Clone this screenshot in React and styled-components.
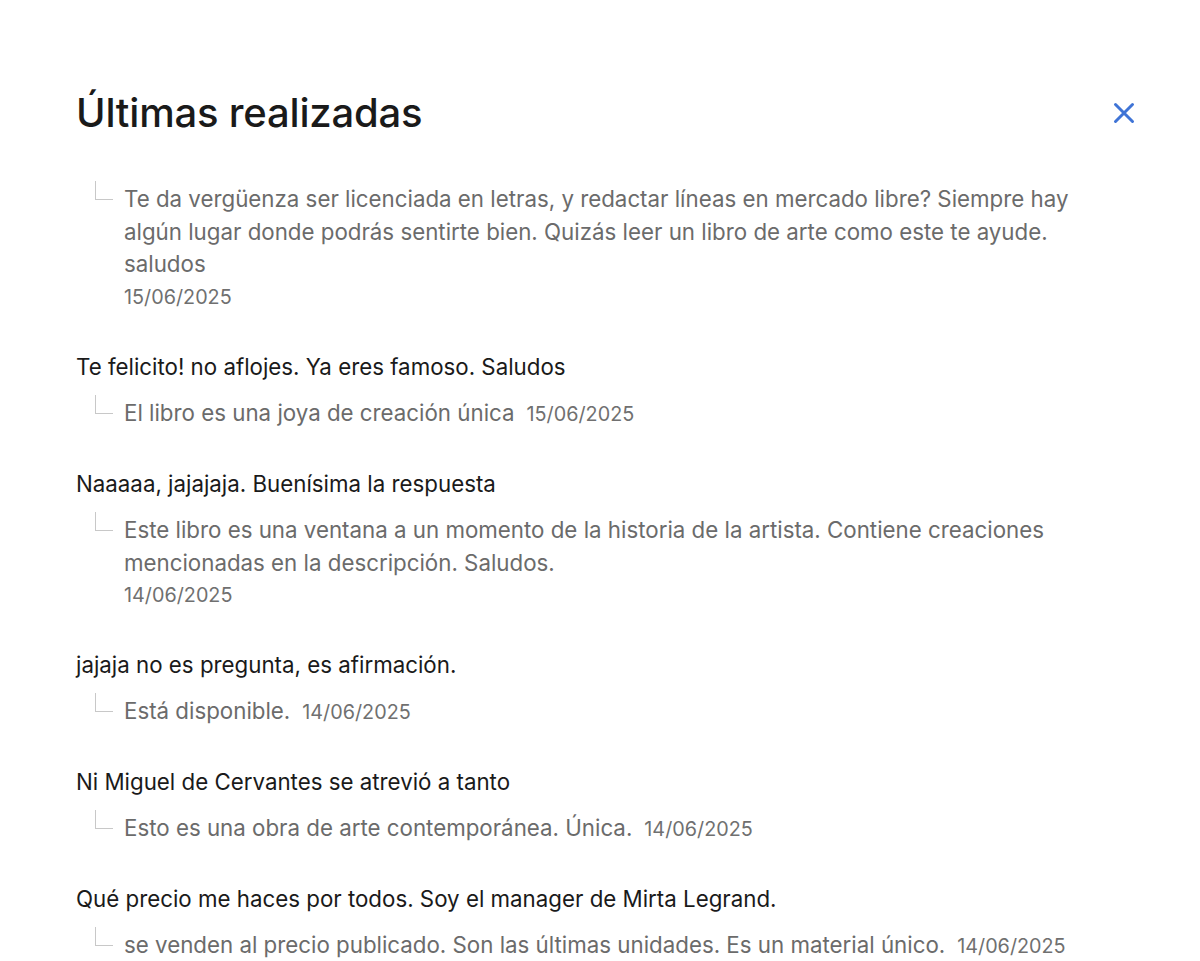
import React from "react";
import styled, { createGlobalStyle } from "styled-components";

const GlobalStyle = createGlobalStyle`
  body {
    margin: 0;
    background: #fff;
    font-family: Inter, "Open Sans", sans-serif;
  }
`;

const Page = styled.div`
  box-sizing: border-box;
  width: 1200px;
  height: 961px;
  overflow: hidden;
  padding: 89px 64px 0 76px;
`;

const Header = styled.div`
  display: flex;
  align-items: center;
  justify-content: space-between;
`;

const Title = styled.h2`
  margin: 0;
  font-size: 40px;
  line-height: 48px;
  font-weight: 500;
  color: #1a1a1a;
  letter-spacing: -0.2px;
`;

const CloseButton = styled.button`
  display: flex;
  align-items: center;
  justify-content: center;
  width: 28px;
  height: 28px;
  padding: 0;
  margin-right: -2px;
  border: none;
  background: none;
  cursor: pointer;
`;

const List = styled.div`
  display: flex;
  flex-direction: column;
  gap: 37.5px;
  margin-top: 46px;
`;

const Item = styled.div`
  display: flex;
  flex-direction: column;
  gap: 14px;
`;

const Question = styled.p`
  margin: 0;
  font-size: 22.3px;
  line-height: 32px;
  color: #1a1a1a;
`;

const Reply = styled.div`
  display: flex;
  align-items: flex-start;
`;

const Corner = styled.span`
  flex: none;
  width: 17px;
  height: 18px;
  margin: -2px 11px 0 19px;
  border-left: 1px solid #c8c8c8;
  border-bottom: 1px solid #c8c8c8;
`;

const Answer = styled.p`
  margin: 0;
  max-width: 986px;
  font-size: 22.3px;
  line-height: 32.6px;
  color: #6b6b6b;
`;

const DateText = styled.span`
  display: ${(p) => (p.$stacked ? "block" : "inline")};
  margin-left: ${(p) => (p.$stacked ? "0" : "12px")};
  font-size: 19.8px;
  color: #707070;
`;

const items = [
  {
    answer:
      "Te da vergüenza ser licenciada en letras, y redactar líneas en mercado libre? Siempre hay algún lugar donde podrás sentirte bien. Quizás leer un libro de arte como este te ayude. saludos",
    date: "15/06/2025",
    stacked: true,
  },
  {
    question: "Te felicito! no aflojes. Ya eres famoso. Saludos",
    answer: "El libro es una joya de creación única",
    date: "15/06/2025",
  },
  {
    question: "Naaaaa, jajajaja. Buenísima la respuesta",
    answer:
      "Este libro es una ventana a un momento de la historia de la artista. Contiene creaciones mencionadas en la descripción. Saludos.",
    date: "14/06/2025",
    stacked: true,
  },
  {
    question: "jajaja no es pregunta, es afirmación.",
    answer: "Está disponible.",
    date: "14/06/2025",
  },
  {
    question: "Ni Miguel de Cervantes se atrevió a tanto",
    answer: "Esto es una obra de arte contemporánea. Única.",
    date: "14/06/2025",
  },
  {
    question: "Qué precio me haces por todos. Soy el manager de Mirta Legrand.",
    answer: "se venden al precio publicado. Son las últimas unidades. Es un material único.",
    date: "14/06/2025",
  },
];

function CloseIcon() {
  return (
    <svg width="24" height="24" viewBox="0 0 24 24">
      <path
        d="M3.5 3.5 L20.5 20.5 M20.5 3.5 L3.5 20.5"
        stroke="#3f74d6"
        strokeWidth="3"
        strokeLinecap="round"
        fill="none"
      />
    </svg>
  );
}

export default function App() {
  return (
    <Page>
      <GlobalStyle />
      <Header>
        <Title>Últimas realizadas</Title>
        <CloseButton aria-label="Cerrar">
          <CloseIcon />
        </CloseButton>
      </Header>
      <List>
        {items.map((item, i) => (
          <Item key={i}>
            {item.question && <Question>{item.question}</Question>}
            <Reply>
              <Corner />
              <Answer>
                {item.answer}
                <DateText $stacked={item.stacked}>{item.date}</DateText>
              </Answer>
            </Reply>
          </Item>
        ))}
      </List>
    </Page>
  );
}
